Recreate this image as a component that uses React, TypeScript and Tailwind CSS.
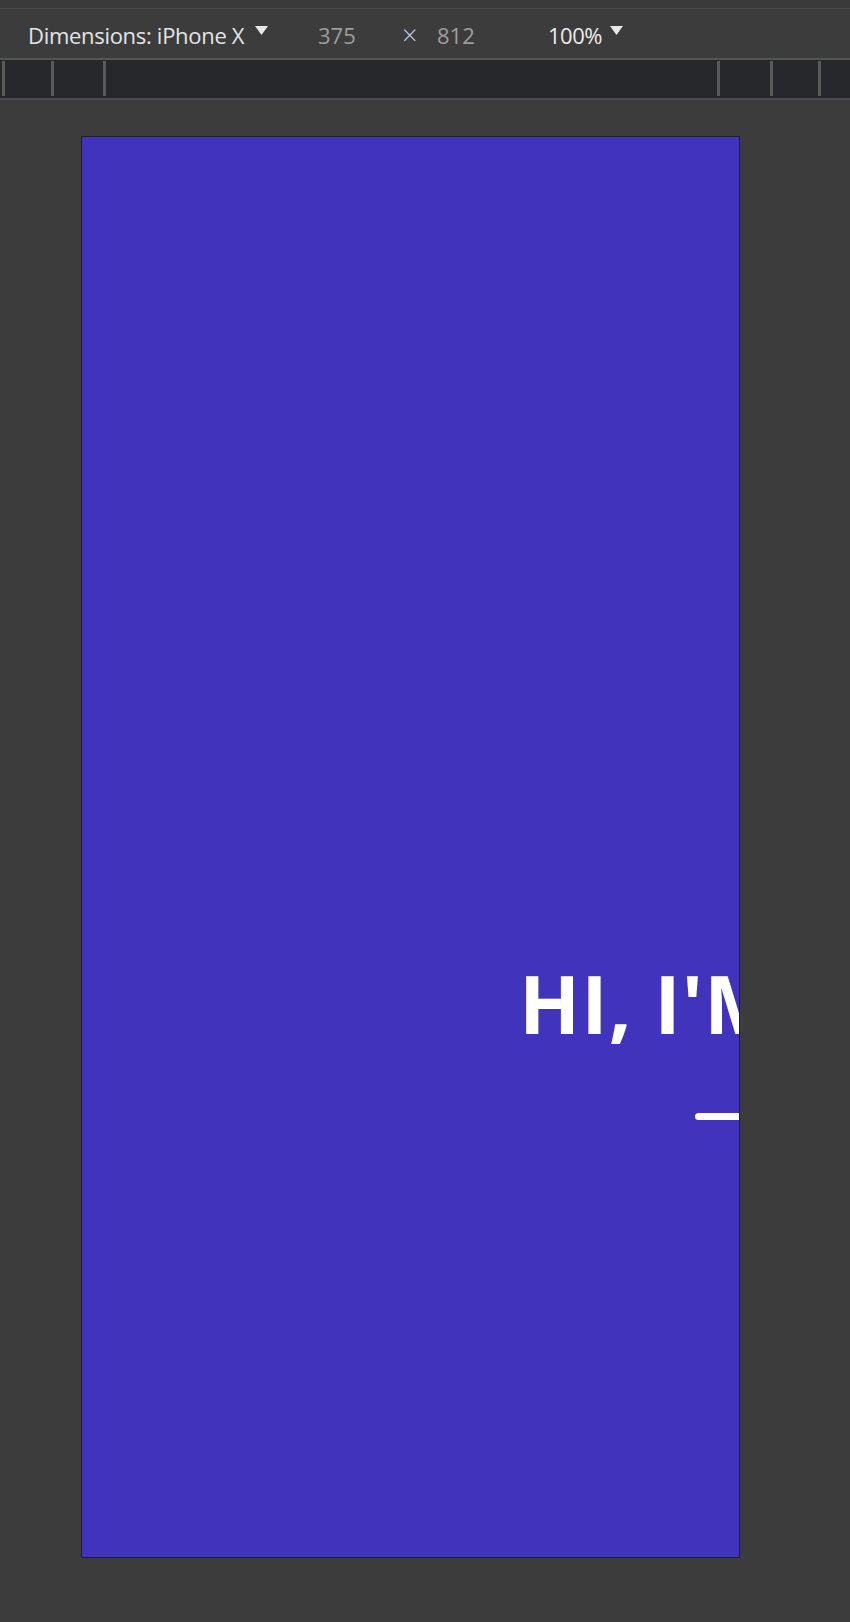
import React from 'react';

const Caret: React.FC = () => (
  <svg width="13" height="10" viewBox="0 0 13 10" className="mb-[8px]">
    <path d="M0 0 L13 0 L6.5 9 Z" fill="#e8e8e8" />
  </svg>
);

export default function App() {
  return (
    <div className="w-[850px] h-[1622px] bg-[#3c3c3c] font-['Open_Sans',sans-serif] overflow-hidden">
      {/* devtools top */}
      <div className="h-[9px] bg-[#3a3a3a] border-b border-[#4a4a4a]" />
      <div className="h-[51px] flex items-center pl-[28px] pt-[2px] text-[22px] leading-none border-b-2 border-[#555555]">
        <span className="w-[227px] text-[#e4e4e4] tracking-[-0.3px] whitespace-nowrap">Dimensions: iPhone X</span>
        <Caret />
        <span className="ml-[50px] w-[84px] text-[#9c9c9c]">375</span>
        <span className="w-[35px] text-[#c8d0e0] text-[27px] font-light">×</span>
        <span className="w-[111px] text-[#9c9c9c]">812</span>
        <span className="w-[62px] text-[#ececec] tracking-[-0.5px]">100%</span>
        <Caret />
      </div>
      <div className="h-[40px] bg-[#27282c] border-b-2 border-[#4e4e4e] flex items-stretch pt-[1px] pb-[2px]">
        <div className="w-[3px] bg-[#5a5a5a] ml-[2px]" />
        <div className="w-[3px] bg-[#5a5a5a] ml-[46px]" />
        <div className="w-[3px] bg-[#5a5a5a] ml-[49px]" />
        <div className="flex-1" />
        <div className="w-[3px] bg-[#5a5a5a]" />
        <div className="w-[3px] bg-[#5a5a5a] ml-[50px]" />
        <div className="w-[3px] bg-[#5a5a5a] ml-[45px]" />
        <div className="w-[29px]" />
      </div>

      {/* device viewport */}
      <div className="pl-[81px] pt-[36px]">
        <div className="w-[659px] h-[1422px] bg-[#4133bb] border border-[#1f1f2a] overflow-hidden">
          <div className="pl-[437px] pt-[818px] whitespace-nowrap">
            <h1 className="text-[80px] leading-[96px] font-bold text-white tracking-[1px]">HI, I'M</h1>
            <div className="ml-[176px] mt-[62px] h-[7px] w-[200px] rounded-full bg-white" />
          </div>
        </div>
      </div>
    </div>
  );
}
